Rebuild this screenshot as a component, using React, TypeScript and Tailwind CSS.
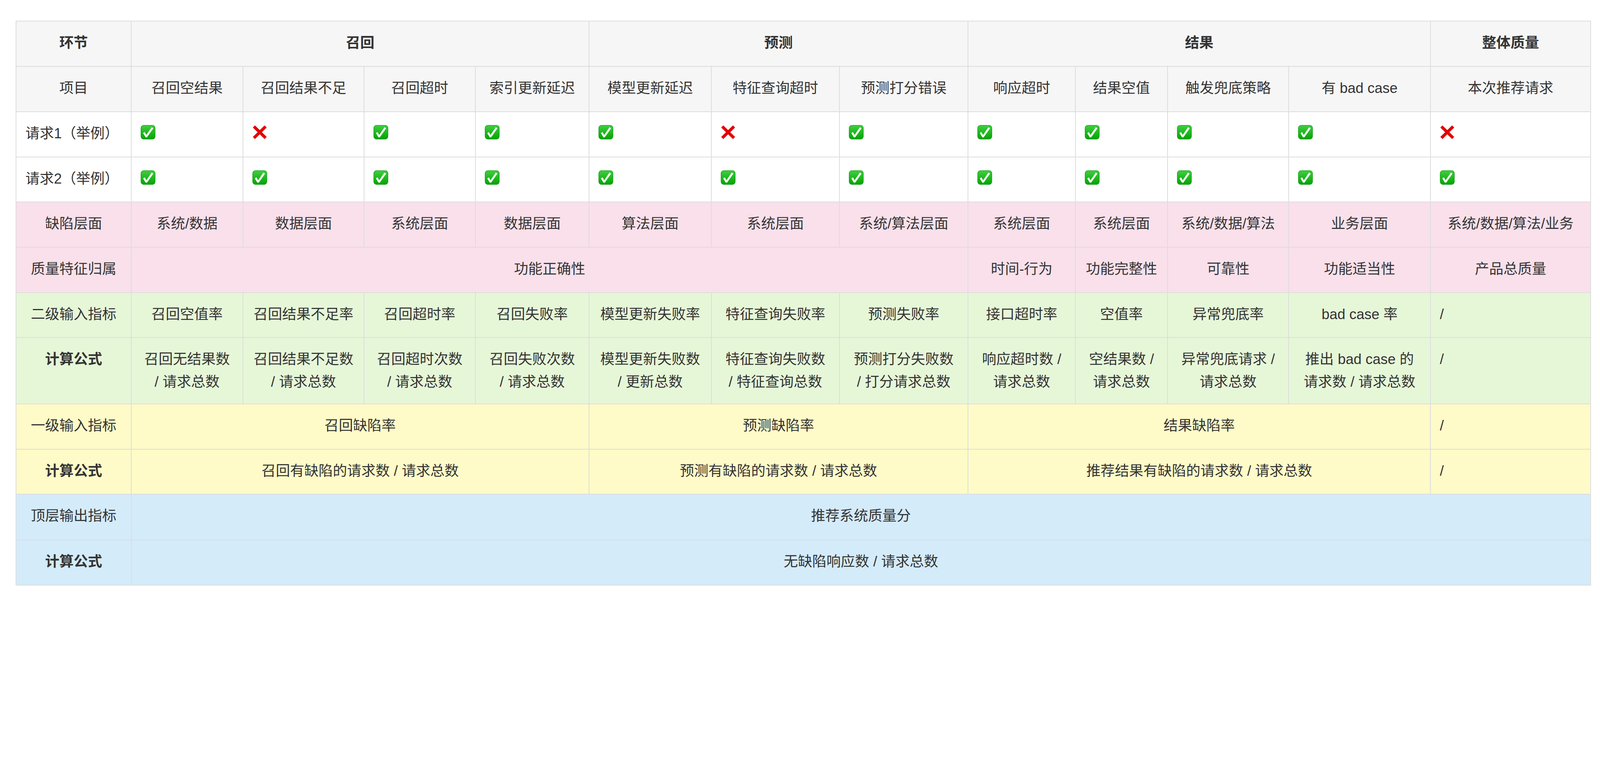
import React from 'react'

const cell = 'border-[2.4px] border-[#dddddd] px-[23px] pt-[26px] pb-0 align-top'

const items = [
  '召回空结果',
  '召回结果不足',
  '召回超时',
  '索引更新延迟',
  '模型更新延迟',
  '特征查询超时',
  '预测打分错误',
  '响应超时',
  '结果空值',
  '触发兜底策略',
  '有 bad case',
  '本次推荐请求',
]

const request1 = [true, false, true, true, true, false, true, true, true, true, true, false]
const request2 = [true, true, true, true, true, true, true, true, true, true, true, true]

const layers = [
  '系统/数据',
  '数据层面',
  '系统层面',
  '数据层面',
  '算法层面',
  '系统层面',
  '系统/算法层面',
  '系统层面',
  '系统层面',
  '系统/数据/算法',
  '业务层面',
  '系统/数据/算法/业务',
]

const level2 = [
  '召回空值率',
  '召回结果不足率',
  '召回超时率',
  '召回失败率',
  '模型更新失败率',
  '特征查询失败率',
  '预测失败率',
  '接口超时率',
  '空值率',
  '异常兜底率',
  'bad case 率',
]

const level2Formula = [
  ['召回无结果数', '/ 请求总数'],
  ['召回结果不足数', '/ 请求总数'],
  ['召回超时次数', '/ 请求总数'],
  ['召回失败次数', '/ 请求总数'],
  ['模型更新失败数', '/ 更新总数'],
  ['特征查询失败数', '/ 特征查询总数'],
  ['预测打分失败数', '/ 打分请求总数'],
  ['响应超时数 /', '请求总数'],
  ['空结果数 /', '请求总数'],
  ['异常兜底请求 /', '请求总数'],
  ['推出 bad case 的', '请求数 / 请求总数'],
]

const CheckIcon = () => (
  <svg width="38" height="37" viewBox="0 0 49 48" className="block mt-[7px]">
    <defs>
      <linearGradient id="ok" x1="0" y1="0" x2="0" y2="1">
        <stop offset="0" stopColor="#3fcf3f" />
        <stop offset="1" stopColor="#05a305" />
      </linearGradient>
    </defs>
    <rect x="1" y="1" width="47" height="46" rx="9" fill="url(#ok)" stroke="#0c960c" strokeWidth="1.5" />
    <path d="M8 27 L13.5 23.5 L19 33 L36.5 7.5 L42 11 L21 41 L16.5 41 Z" fill="#ffffff" />
  </svg>
)

const CrossIcon = () => (
  <svg width="38" height="37" viewBox="0 0 49 48" className="block mt-[7px]">
    <path d="M5 5 L44 43 M44 5 L5 43" stroke="#e20000" strokeWidth="10" />
  </svg>
)

const Mark = ({ ok }: { ok: boolean }) => (ok ? <CheckIcon /> : <CrossIcon />)

export default function App() {
  return (
    <div className="min-h-screen bg-white pt-[53px] pl-[40px] pb-[40px] text-[36.5px] leading-[58px] text-[#333333] font-['Liberation_Sans','Noto_Sans_CJK_SC',sans-serif]">
      <table className="table-fixed border-collapse w-[4033px]">
        <colgroup>
          <col className="w-[295px]" />
          <col className="w-[286px]" />
          <col className="w-[310px]" />
          <col className="w-[285px]" />
          <col className="w-[291px]" />
          <col className="w-[313px]" />
          <col className="w-[328px]" />
          <col className="w-[329px]" />
          <col className="w-[275px]" />
          <col className="w-[236px]" />
          <col className="w-[310px]" />
          <col className="w-[363px]" />
          <col className="w-[410px]" />
        </colgroup>
        <tbody>
          <tr className="h-[116px] bg-[#f6f6f6] font-bold">
            <td className={`${cell} text-center`}>环节</td>
            <td colSpan={4} className={`${cell} text-center`}>召回</td>
            <td colSpan={3} className={`${cell} text-center`}>预测</td>
            <td colSpan={4} className={`${cell} text-center`}>结果</td>
            <td className={`${cell} text-center`}>整体质量</td>
          </tr>
          <tr className="h-[116px] bg-[#f6f6f6]">
            <td className={`${cell} text-center`}>项目</td>
            {items.map((t, i) => (
              <td key={i} className={`${cell} text-center whitespace-nowrap`}>
                {t}
              </td>
            ))}
          </tr>
          <tr className="h-[115.5px] bg-white">
            <td className={`${cell} text-left whitespace-nowrap`}>请求1（举例）</td>
            {request1.map((ok, i) => (
              <td key={i} className={cell}>
                <Mark ok={ok} />
              </td>
            ))}
          </tr>
          <tr className="h-[115.5px] bg-white">
            <td className={`${cell} text-left whitespace-nowrap`}>请求2（举例）</td>
            {request2.map((ok, i) => (
              <td key={i} className={cell}>
                <Mark ok={ok} />
              </td>
            ))}
          </tr>
          <tr className="h-[116px] bg-[#f9e0ea]">
            <td className={`${cell} text-center`}>缺陷层面</td>
            {layers.map((t, i) => (
              <td key={i} className={`${cell} text-center whitespace-nowrap`}>
                {t}
              </td>
            ))}
          </tr>
          <tr className="h-[115.5px] bg-[#f9e0ea]">
            <td className={`${cell} text-center whitespace-nowrap`}>质量特征归属</td>
            <td colSpan={7} className={`${cell} text-center`}>功能正确性</td>
            <td className={`${cell} text-center`}>时间-行为</td>
            <td className={`${cell} text-center`}>功能完整性</td>
            <td className={`${cell} text-center`}>可靠性</td>
            <td className={`${cell} text-center`}>功能适当性</td>
            <td className={`${cell} text-center`}>产品总质量</td>
          </tr>
          <tr className="h-[115.5px] bg-[#e6f7d8]">
            <td className={`${cell} text-center whitespace-nowrap`}>二级输入指标</td>
            {level2.map((t, i) => (
              <td key={i} className={`${cell} text-center whitespace-nowrap`}>
                {t}
              </td>
            ))}
            <td className={`${cell} text-left`}>/</td>
          </tr>
          <tr className="h-[170px] bg-[#e6f7d8]">
            <td className={`${cell} text-center font-bold`}>计算公式</td>
            {level2Formula.map(([a, b], i) => (
              <td key={i} className={`${cell} text-center whitespace-nowrap`}>
                {a}
                <br />
                {b}
              </td>
            ))}
            <td className={`${cell} text-left`}>/</td>
          </tr>
          <tr className="h-[115.5px] bg-[#fefbc8]">
            <td className={`${cell} text-center whitespace-nowrap`}>一级输入指标</td>
            <td colSpan={4} className={`${cell} text-center`}>召回缺陷率</td>
            <td colSpan={3} className={`${cell} text-center`}>预测缺陷率</td>
            <td colSpan={4} className={`${cell} text-center`}>结果缺陷率</td>
            <td className={`${cell} text-left`}>/</td>
          </tr>
          <tr className="h-[115.5px] bg-[#fefbc8]">
            <td className={`${cell} text-center font-bold`}>计算公式</td>
            <td colSpan={4} className={`${cell} text-center`}>召回有缺陷的请求数 / 请求总数</td>
            <td colSpan={3} className={`${cell} text-center`}>预测有缺陷的请求数 / 请求总数</td>
            <td colSpan={4} className={`${cell} text-center`}>推荐结果有缺陷的请求数 / 请求总数</td>
            <td className={`${cell} text-left`}>/</td>
          </tr>
          <tr className="h-[117px] bg-[#d4ebfa]">
            <td className={`${cell} text-center whitespace-nowrap`}>顶层输出指标</td>
            <td colSpan={12} className={`${cell} text-center`}>推荐系统质量分</td>
          </tr>
          <tr className="h-[115.5px] bg-[#d4ebfa]">
            <td className={`${cell} text-center font-bold`}>计算公式</td>
            <td colSpan={12} className={`${cell} text-center`}>无缺陷响应数 / 请求总数</td>
          </tr>
        </tbody>
      </table>
    </div>
  )
}
